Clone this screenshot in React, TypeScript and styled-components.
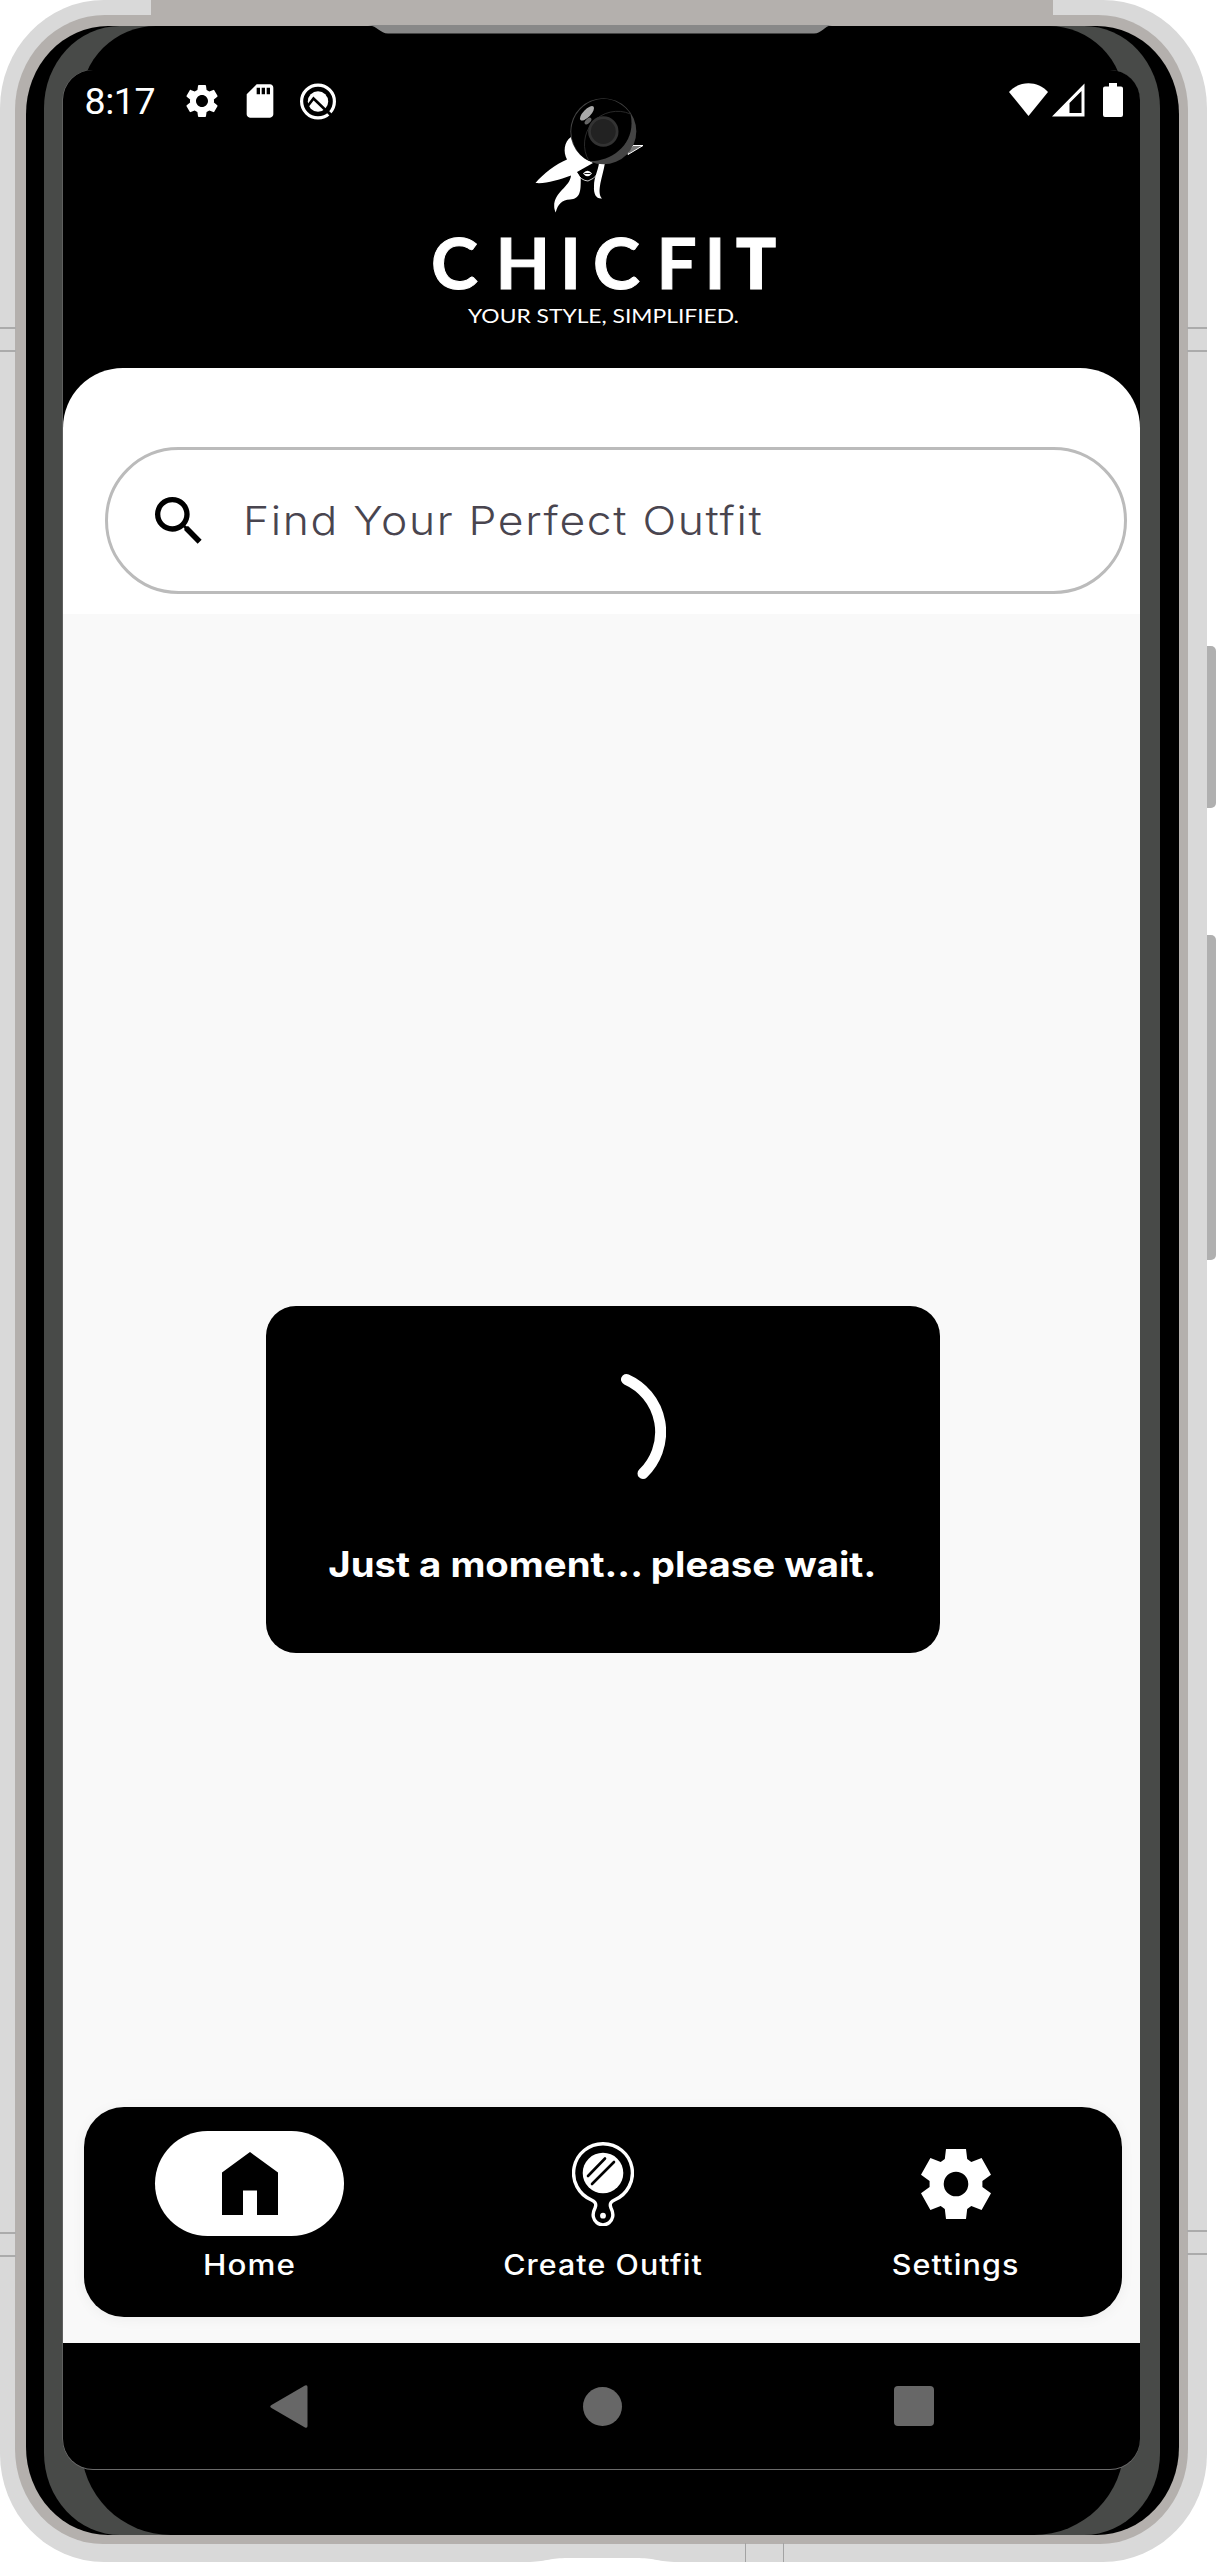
import React from "react";
import styled, { createGlobalStyle } from "styled-components";
import { MdSearch, MdSettings, MdSdCard } from "react-icons/md";

const GlobalStyle = createGlobalStyle`
  * { box-sizing: border-box; }
  html, body { margin: 0; padding: 0; background: #fff; }
  body { width: 1216px; height: 2562px; overflow: hidden; }
  svg { display: block; }
`;

/* ---------- device shell ---------- */

const Device = styled.div`
  position: relative;
  width: 1216px;
  height: 2562px;
`;

const Shell = styled.div`
  position: relative;
  width: 1207px;
  height: 2562px;
  padding: 15px 19px 18px 15px;
  background: #d9d9d9;
  border-radius: 104px / 108px;
`;

const Band = styled.div`
  height: 2529px;
  padding: 10.5px 9.5px 9.5px 10.5px;
  background: #b4b0ad;
  border-radius: 90px 90px 88px 88px / 95px;
`;

const Rim = styled.div`
  height: 2509px;
  padding: 0 18.5px;
  background: #000;
  border-radius: 82px / 88px;
`;

const Glass = styled.div`
  position: relative;
  height: 2509px;
  padding: 44.5px 20px 0 18.5px;
  background: #484a48;
  border-radius: 76px / 82px;
`;

const GlassCore = styled.div`
  position: absolute;
  top: 0;
  bottom: 0;
  left: 36.5px;
  right: 36px;
  background: #000;
  border-radius: 75px 75px 90px 90px;
`;

const TopBand = styled.div`
  position: absolute;
  left: 151px;
  top: 0;
  width: 902px;
  height: 16px;
  background: #b4b0ad;
`;

const Earpiece = styled.svg`
  position: absolute;
  left: 366px;
  top: 25px;
`;

const PortNotch = styled.svg`
  position: absolute;
  left: 530px;
  top: 2556px;
`;

const SideSeam = styled.div<{ $x: number; $y: number }>`
  position: absolute;
  left: ${(p) => p.$x}px;
  top: ${(p) => p.$y}px;
  width: ${(p) => (p.$x ? 20 : 16)}px;
  height: 25px;
  border: solid #ababab;
  border-width: 2px 0;
`;

const BottomSeam = styled.div`
  position: absolute;
  left: 745px;
  top: 2543px;
  width: 38.5px;
  height: 19px;
  border: solid #a3a3a3;
  border-width: 0 1.5px;
`;

const SideButton = styled.div<{ $y: number; $h: number }>`
  position: absolute;
  left: 1206px;
  top: ${(p) => p.$y}px;
  width: 10px;
  height: ${(p) => p.$h}px;
  background: #b0b0b0;
  border-radius: 0 5px 5px 0;
`;

/* ---------- screen ---------- */

const Screen = styled.main`
  position: relative;
  display: flex;
  flex-direction: column;
  width: 1077px;
  height: 2399px;
  overflow: hidden;
  background: #000;
  border-radius: 30px;
  box-shadow: -0.5px 0 0 0 #777, 0 1px 0 0 #6a6a6a;
  font-family: Inter, "Liberation Sans", sans-serif;
`;

const StatusBar = styled.header`
  display: flex;
  justify-content: space-between;
  height: 62px;
  padding: 13px 17px 0 22px;
  color: #fff;
`;

const StatusGroup = styled.div<{ $gap: number }>`
  display: flex;
  align-items: flex-start;
  gap: ${(p) => p.$gap}px;
`;

const StatusGlyph = styled.span`
  margin-top: -2px;
`;

const BatterySlot = styled.span`
  margin-left: 14px;
`;

const Clock = styled.time`
  width: 74px;
  font: 400 37.5px/36px Roboto, sans-serif;
  letter-spacing: -0.4px;
  white-space: nowrap;
`;

const Brand = styled.div`
  height: 236px;
`;

const BrandArt = styled.svg`
  position: absolute;
  left: 357px;
  top: 20px;
`;

const SearchSheet = styled.section`
  height: 246px;
  padding: 79px 13px 0 42px;
  background: #fff;
  border-radius: 60px 60px 0 0;
`;

const SearchBox = styled.label`
  display: flex;
  align-items: center;
  gap: 32px;
  height: 147px;
  padding: 1px 0 0 39px;
  border: 3px solid #bbb;
  border-radius: 74px;
  color: #000;
`;

const Placeholder = styled.span`
  color: #49454f;
  font-size: 40px;
  font-weight: 300;
  letter-spacing: 1.5px;
  line-height: 50px;
  white-space: nowrap;
  transform: scaleX(1.11);
  transform-origin: left center;
`;

const Content = styled.section`
  display: flex;
  flex: 1;
  flex-direction: column;
  align-items: center;
  justify-content: space-between;
  padding: 692px 18px 26px 21px;
  background: #f9f9f9;
`;

const Dialog = styled.div`
  display: flex;
  flex-direction: column;
  align-items: center;
  width: 674px;
  height: 347px;
  padding-top: 63px;
  border-radius: 30px;
  background: #000;
`;

const DialogText = styled.p`
  margin: 47px 0 0;
  color: #fff;
  font-size: 35px;
  font-weight: 700;
  line-height: 44px;
  white-space: nowrap;
  transform: scaleX(1.095);
`;

const Tabs = styled.nav`
  display: grid;
  grid-template-columns: repeat(3, 353px);
  width: 1038px;
  height: 210px;
  padding: 24px 0 0;
  justify-content: center;
  border-radius: 40px;
  background: #000;
  box-shadow: 0 2px 14px rgba(0, 0, 0, 0.05);
`;

const Tab = styled.a`
  display: flex;
  flex-direction: column;
  align-items: center;
  gap: 12px;
  color: #fff;
`;

const TabIcon = styled.div<{ $active?: boolean }>`
  display: flex;
  align-items: center;
  justify-content: center;
  width: 189px;
  height: 105px;
  border-radius: 53px;
  background: ${(p) => (p.$active ? "#fff" : "transparent")};
`;

const TabLabel = styled.span<{ $stretch: number }>`
  font-size: 28px;
  font-weight: 450;
  letter-spacing: 1px;
  line-height: 34px;
  white-space: nowrap;
  transform: scaleX(${(p) => p.$stretch});
`;

const SystemNav = styled.footer`
  display: flex;
  align-items: center;
  justify-content: space-between;
  height: 126px;
  padding: 0 206px;
`;

const Camera = styled.svg`
  position: absolute;
  left: 569px;
  top: 97px;
`;

/* ---------- icons ---------- */

const AgentIcon = () => (
  <svg width="38" height="38" viewBox="0 0 38 38">
    <circle cx="19" cy="18.5" r="16.4" fill="none" stroke="#fff" strokeWidth="3.2" />
    <circle cx="19" cy="18.5" r="10.2" fill="#fff" />
    <path d="M8 24 L14.5 15.5 L27 27.5" fill="none" stroke="#000" strokeWidth="2.6" />
    <path d="M26 26 L34 34" stroke="#000" strokeWidth="3" />
  </svg>
);

const WifiIcon = () => (
  <svg width="39" height="34" viewBox="0 0 39 34">
    <path d="M0 9 C10 -2.700 29 -2.700 39 9 L19.500 33 Z" fill="#fff" />
  </svg>
);

const SignalIcon = () => (
  <svg width="33" height="34" viewBox="0 0 33 34">
    <path fillRule="evenodd" d="M0 33.500 L32.500 0.500 V33.500 Z M17.500 20 V30 H29.500 V8 Z" fill="#fff" />
  </svg>
);

const BatteryIcon = () => (
  <svg width="20" height="34" viewBox="0 0 20 34">
    <path d="M6 0 H14 V3.500 H18 Q20 3.500 20 5.500 V32 Q20 34 18 34 H2 Q0 34 0 32 V5.500 Q0 3.500 2 3.500 H6 Z" fill="#fff" />
  </svg>
);

const HomeIcon = () => (
  <svg width="56" height="63" viewBox="0 0 56 63">
    <path d="M0 20.500 L28 0 L56 20.500 V63 H35 V38.500 H21 V63 H0 Z" fill="#000" />
  </svg>
);

const MirrorIcon = () => (
  <svg width="62" height="84" viewBox="0 0 62 84">
    <path
      d="M31 1.700 A29.300 29.300 0 0 1 42.500 58 C38 60 37.500 62.500 39 66 C41 70 41.300 72 40.600 75 A9.800 9.800 0 0 1 21.400 75 C20.700 72 21 70 23 66 C24.500 62.500 24 60 19.500 58 A29.300 29.300 0 0 1 31 1.700 Z"
      fill="none"
      stroke="#fff"
      strokeWidth="3.400"
    />
    <circle cx="31" cy="31" r="20.300" fill="#fff" />
    <path d="M16 34 L33 16.500 M20 42 L42 20" stroke="#000" strokeWidth="2.600" fill="none" strokeLinecap="round" />
    <circle cx="31" cy="73.700" r="2.900" fill="#fff" />
  </svg>
);

const GearIcon = () => (
  <svg width="70" height="70" viewBox="-35 -35 70 70">
    <path
      fillRule="evenodd"
      d="M-10 -35 H10 L11.200 -25 L15.300 -22 L25.600 -26 L35 -9.300 L26.400 -3 V3 L35 9.300 L25.600 26 L15.300 22 L11.200 25 L10 35 H-10 L-11.200 25 L-15.300 22 L-25.600 26 L-35 9.300 L-26.400 3 V-3 L-35 -9.300 L-25.600 -26 L-15.300 -22 L-11.200 -25 Z M0 -12.300 A12.300 12.300 0 1 0 0 12.300 A12.300 12.300 0 1 0 0 -12.300 Z"
      fill="#fff"
    />
  </svg>
);

const Spinner = () => (
  <svg width="126" height="126" viewBox="-63 -63 126 126">
    <path d="M23.500 -52.600 A57.600 57.600 0 0 1 40 41.500" fill="none" stroke="#fff" strokeWidth="11" strokeLinecap="round" />
  </svg>
);

/* Drawn in device coordinates: the view box starts at (420, 90). */
const BrandMark = () => (
  <BrandArt width="370" height="250" viewBox="420 90 370 250" fill="#fff">
    <path d="M571 137 C564 142 563 152 567 159.500 C556 164 543 174 535.500 183 C546 184 558 180 571 175.500 C570 187 554 192 554.200 206 C554 208 555 211 555.700 212.500 C558 204 562 200 570 199.600 C580 198.500 581 192 580.700 178 L577 172 L593 163 C585 158 574 149 571 137 Z" />
    <path d="M599 163 C598 171 594 177 594 186 C593.500 194 596 199 602 198.500 C596 192 603 176 604.700 164 Z" />
    <path d="M577 173 Q581 180.500 588 181 Q594 179 597.500 174" fill="none" stroke="#fff" strokeWidth="0.800" />
    <path d="M583 173.500 Q587.500 168 592 173.500 Q587.500 179 583 173.500 Z" />
    <path d="M584.500 173.500 H590.500" stroke="#000" strokeWidth="0.900" />
    <path d="M628 152 L633 145.500 H643 L628 154.500 Z" fill="#777" stroke="#fff" strokeWidth="1" />
    <text
      x="431 495.500 560 593 656.500 704.500 735.500"
      y="289"
      fontFamily="Lato, sans-serif"
      fontWeight="700"
      fontSize="71"
      stroke="#fff"
      strokeWidth="1"
    >
      CHICFI<tspan fontFamily="Open Sans, sans-serif">T</tspan>
    </text>
    <text x="468" y="323.300" fontFamily="Lato, sans-serif" fontWeight="400" fontSize="19.500" textLength="271" lengthAdjust="spacingAndGlyphs">
      YOUR STYLE, SIMPLIFIED.
    </text>
  </BrandArt>
);

const BackIcon = () => (
  <svg width="43" height="45" viewBox="0 0 43 45">
    <path d="M2.500 21 L36 1.500 Q38.500 0.500 38.500 3 V42 Q38.500 44.500 36 43.500 L2.500 24 Q0 22.500 2.500 21 Z" fill="#676767" />
  </svg>
);

const HomeDot = styled.div`
  width: 39px;
  height: 39px;
  border-radius: 50%;
  background: #676767;
`;

const RecentsSquare = styled.div`
  width: 40px;
  height: 40px;
  border-radius: 4px;
  background: #676767;
`;

const tabs = [
  { label: "Home", icon: <HomeIcon />, active: true, stretch: 1.12 },
  { label: "Create Outfit", icon: <MirrorIcon />, active: false, stretch: 1.085 },
  { label: "Settings", icon: <GearIcon />, active: false, stretch: 1.09 },
];

export default function App() {
  return (
    <Device>
      <GlobalStyle />
      <SideButton $y={646} $h={162} />
      <SideButton $y={935} $h={325} />
      <Shell>
        <Band>
          <Rim>
            <Glass>
              <GlassCore />
              <Screen>
                <StatusBar>
                  <StatusGroup $gap={23}>
                    <Clock>8:17</Clock>
                    <StatusGroup $gap={18.5}>
                      <StatusGlyph>
                        <MdSettings size={40} />
                      </StatusGlyph>
                      <StatusGlyph>
                        <MdSdCard size={40} />
                      </StatusGlyph>
                      <AgentIcon />
                    </StatusGroup>
                  </StatusGroup>
                  <StatusGroup $gap={4}>
                    <WifiIcon />
                    <SignalIcon />
                    <BatterySlot>
                      <BatteryIcon />
                    </BatterySlot>
                  </StatusGroup>
                </StatusBar>
                <Brand>
                  <BrandMark />
                </Brand>
                <SearchSheet>
                  <SearchBox>
                    <MdSearch size={64} />
                    <Placeholder>Find Your Perfect Outfit</Placeholder>
                  </SearchBox>
                </SearchSheet>
                <Content>
                  <Dialog>
                    <Spinner />
                    <DialogText>Just a moment... please wait.</DialogText>
                  </Dialog>
                  <Tabs>
                    {tabs.map((t) => (
                      <Tab key={t.label}>
                        <TabIcon $active={t.active}>{t.icon}</TabIcon>
                        <TabLabel $stretch={t.stretch}>{t.label}</TabLabel>
                      </Tab>
                    ))}
                  </Tabs>
                </Content>
                <SystemNav>
                  <BackIcon />
                  <HomeDot />
                  <RecentsSquare />
                </SystemNav>
              </Screen>
            </Glass>
          </Rim>
        </Band>
        <TopBand />
        <Earpiece width="466" height="9" viewBox="366 25 466 9">
          <path d="M368 25 H832 C824 26 822 33.500 814 33.500 H388 C380 33.500 378 26 368 25 Z" fill="#888" />
        </Earpiece>
        <SideSeam $x={0} $y={327} />
        <SideSeam $x={1187} $y={327} />
        <SideSeam $x={0} $y={2232} />
        <SideSeam $x={1187} $y={2230} />
        <BottomSeam />
        <PortNotch width="145" height="6" viewBox="0 0 145 6">
          <path d="M0 6 C18 5 20 2 38 2 H106 C124 2 126 5 144 6 Z" fill="#fff" />
        </PortNotch>
      </Shell>
      <Camera width="68" height="68" viewBox="0 0 68 68">
        <circle cx="34.300" cy="34.300" r="33" fill="#444" />
        <path d="M34 1.800 A33 33 0 0 0 20 64 C43 65 68 46 61.500 17 A33 33 0 0 0 34 1.800 Z" fill="#000" />
        <path d="M20 64 A33 33 0 0 1 61.500 17" fill="none" stroke="#333" strokeWidth="0.800" />
        <circle cx="34.300" cy="34.500" r="13.800" fill="#222" stroke="#333" strokeWidth="2.800" />
        <ellipse cx="18" cy="16.300" rx="9.300" ry="3.800" transform="rotate(-46 18 16.300)" fill="#aaa" />
        <ellipse cx="19" cy="24" rx="4.200" ry="2.300" transform="rotate(-46 19 24)" fill="#666" />
      </Camera>
    </Device>
  );
}
